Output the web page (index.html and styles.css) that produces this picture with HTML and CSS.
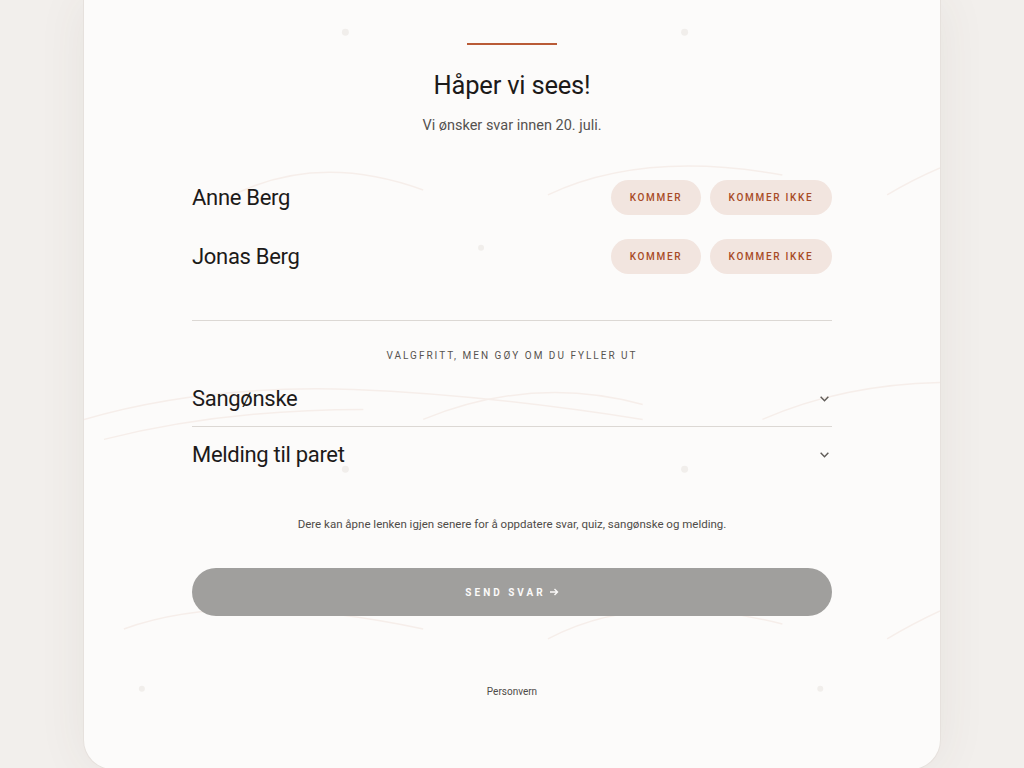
FILE: index.html
```html
<!DOCTYPE html>
<html lang="no">
<head>
<meta charset="utf-8">
<title>Svar på invitasjon</title>
<link rel="stylesheet" href="styles.css">
</head>
<body>
<main class="card">
  <svg class="decor" viewBox="0 0 858 770" aria-hidden="true">
    <g fill="none" stroke="#f6eeea" stroke-width="1.5">
      <path d="M140 200 Q 230 150 340 190"/>
      <path d="M465 195 Q 560 150 700 175"/>
      <path d="M805 195 Q 830 180 858 168"/>
      <path d="M0 420 Q 120 385 270 390 Q 400 395 560 420"/>
      <path d="M20 440 Q 140 410 280 410"/>
      <path d="M340 420 Q 450 375 560 405"/>
      <path d="M680 420 Q 760 385 858 383"/>
      <path d="M40 630 Q 150 590 340 630"/>
      <path d="M465 640 Q 560 590 700 625"/>
      <path d="M805 640 Q 830 625 858 612"/>
    </g>
    <g fill="#f1eeeb">
      <circle cx="262" cy="32" r="3.5"/>
      <circle cx="602" cy="32" r="3.5"/>
      <circle cx="398" cy="248" r="3"/>
      <circle cx="602" cy="470" r="3.5"/>
      <circle cx="262" cy="470" r="3.5"/>
      <circle cx="58" cy="690" r="3"/>
      <circle cx="738" cy="690" r="3"/>
    </g>
  </svg>

  <div class="content">
    <div class="rule"></div>
    <h1 class="title">Håper vi sees!</h1>
    <p class="lead">Vi ønsker svar innen 20. juli.</p>

    <section class="guests">
      <div class="guest">
        <span class="guest-name">Anne Berg</span>
        <div class="choices">
          <button class="chip">Kommer</button>
          <button class="chip">Kommer ikke</button>
        </div>
      </div>
      <div class="guest">
        <span class="guest-name">Jonas Berg</span>
        <div class="choices">
          <button class="chip">Kommer</button>
          <button class="chip">Kommer ikke</button>
        </div>
      </div>
    </section>

    <p class="eyebrow">Valgfritt, men gøy om du fyller ut</p>

    <div class="extras">
      <div class="extra">
        <span class="extra-title">Sangønske</span>
        <svg class="chev" viewBox="0 0 10 10" aria-hidden="true"><path d="M1.5 3.5 L5 7 L8.5 3.5"/></svg>
      </div>
      <div class="extra">
        <span class="extra-title">Melding til paret</span>
        <svg class="chev" viewBox="0 0 10 10" aria-hidden="true"><path d="M1.5 3.5 L5 7 L8.5 3.5"/></svg>
      </div>
    </div>

    <p class="note">Dere kan åpne lenken igjen senere for å oppdatere svar, quiz, sangønske og melding.</p>

    <button class="submit">Send svar <svg class="arrow" viewBox="0 0 10 10" aria-hidden="true"><path d="M1 5 H8.5 M5.5 2 L8.5 5 L5.5 8"/></svg></button>

    <a class="privacy" href="#">Personvern</a>
  </div>
</main>
</body>
</html>
```

FILE: styles.css
```css
html, body {
  margin: 0;
  height: 768px;
  overflow: hidden;
}

body {
  background: #f2efec;
  font-family: Roboto, "Liberation Sans", sans-serif;
  color: #1c1a19;
}

.card {
  position: relative;
  box-sizing: border-box;
  width: 858px;
  height: 770px;
  margin: 0 auto;
  background: #fcfbfa;
  border: 1px solid #e6e1dd;
  border-top: none;
  border-radius: 0 0 30px 30px;
  box-shadow: 0 0 50px rgba(90, 70, 60, 0.07);
  overflow: hidden;
}

.decor {
  position: absolute;
  inset: 0;
  width: 100%;
  height: 100%;
  pointer-events: none;
}

.content {
  position: relative;
  width: 640px;
  margin: 0 auto;
  padding-top: 43px;
  display: flex;
  flex-direction: column;
  align-items: center;
}

.rule {
  width: 90px;
  height: 2px;
  background: #b95b36;
}

.title {
  margin: 24px 0 0;
  font-size: 25.5px;
  font-weight: 400;
  line-height: 32px;
  letter-spacing: -0.2px;
}

.lead {
  margin: 16px 0 0;
  font-size: 14.5px;
  line-height: 18px;
  color: #555250;
}

.guests {
  align-self: stretch;
  margin-top: 45px;
  padding-bottom: 46px;
  border-bottom: 1px solid #dcd8d4;
  display: flex;
  flex-direction: column;
  gap: 24px;
}

.guest {
  display: flex;
  align-items: center;
  justify-content: space-between;
}

.guest-name {
  font-size: 22px;
  letter-spacing: -0.3px;
}

.choices {
  display: flex;
  gap: 9px;
}

.chip {
  height: 35px;
  padding: 0;
  border: none;
  border-radius: 18px;
  background: #f2e5df;
  color: #a84b27;
  font-family: inherit;
  font-size: 10px;
  font-weight: 500;
  letter-spacing: 1.7px;
  text-transform: uppercase;
}

.chip:first-child {
  width: 90px;
}

.chip:last-child {
  width: 122px;
}

.eyebrow {
  margin: 29px 0 0;
  font-size: 10px;
  line-height: 12px;
  letter-spacing: 2px;
  text-transform: uppercase;
  color: #57534f;
}

.extras {
  align-self: stretch;
  margin-top: 9px;
  display: flex;
  flex-direction: column;
}

.extra {
  display: flex;
  align-items: center;
  justify-content: space-between;
  height: 55px;
}

.extra + .extra {
  height: 54px;
  border-top: 1px solid #dcd8d4;
}

.extra-title {
  font-size: 22px;
  letter-spacing: -0.3px;
}

.chev {
  width: 11px;
  height: 11px;
  margin-right: 2px;
  fill: none;
  stroke: #5f5b57;
  stroke-width: 1.3;
}

.note {
  margin: 36px 0 0;
  font-size: 11.5px;
  line-height: 14px;
  color: #4f4b48;
}

.submit {
  align-self: stretch;
  margin-top: 37px;
  height: 48px;
  border: none;
  border-radius: 24px;
  background: #a09f9d;
  color: #fbfaf9;
  font-family: inherit;
  font-size: 10px;
  font-weight: 700;
  letter-spacing: 3px;
  text-transform: uppercase;
  display: flex;
  align-items: center;
  justify-content: center;
}

.arrow {
  width: 10px;
  height: 10px;
  margin-left: 3px;
  fill: none;
  stroke: #fbfaf9;
  stroke-width: 1.4;
}

.privacy {
  margin-top: 70px;
  font-size: 10px;
  color: #4f4b48;
  text-decoration: none;
}
```
